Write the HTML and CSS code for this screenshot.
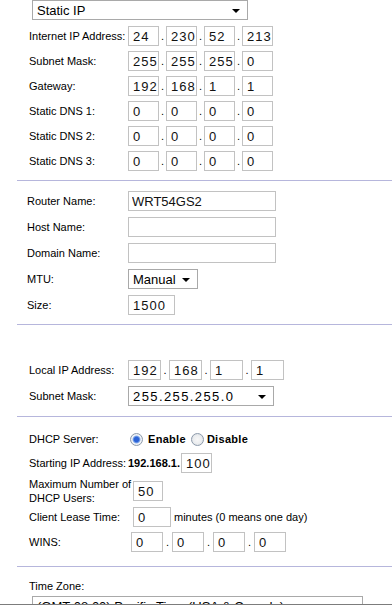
FILE: index.html
```html
<!DOCTYPE html>
<html>
<head>
<meta charset="utf-8">
<link rel="stylesheet" href="styles.css">
</head>
<body>
<div class="page">
  <section class="sec sec-wan">
    <div class="sel sel-wan"><span>Static IP</span><i class="arrow"></i></div>
    <div class="row">
      <span class="lbl">Internet IP Address:</span>
      <div class="ip ip-a"><input class="box" value="24"><span class="dot">.</span><input class="box" value="230"><span class="dot">.</span><input class="box" value="52"><span class="dot">.</span><input class="box" value="213"></div>
    </div>
    <div class="row">
      <span class="lbl">Subnet Mask:</span>
      <div class="ip ip-a"><input class="box" value="255"><span class="dot">.</span><input class="box" value="255"><span class="dot">.</span><input class="box" value="255"><span class="dot">.</span><input class="box" value="0"></div>
    </div>
    <div class="row">
      <span class="lbl">Gateway:</span>
      <div class="ip ip-a"><input class="box" value="192"><span class="dot">.</span><input class="box" value="168"><span class="dot">.</span><input class="box" value="1"><span class="dot">.</span><input class="box" value="1"></div>
    </div>
    <div class="row">
      <span class="lbl">Static DNS 1:</span>
      <div class="ip ip-a"><input class="box" value="0"><span class="dot">.</span><input class="box" value="0"><span class="dot">.</span><input class="box" value="0"><span class="dot">.</span><input class="box" value="0"></div>
    </div>
    <div class="row">
      <span class="lbl">Static DNS 2:</span>
      <div class="ip ip-a"><input class="box" value="0"><span class="dot">.</span><input class="box" value="0"><span class="dot">.</span><input class="box" value="0"><span class="dot">.</span><input class="box" value="0"></div>
    </div>
    <div class="row">
      <span class="lbl">Static DNS 3:</span>
      <div class="ip ip-a"><input class="box" value="0"><span class="dot">.</span><input class="box" value="0"><span class="dot">.</span><input class="box" value="0"><span class="dot">.</span><input class="box" value="0"></div>
    </div>
  </section>
  <hr class="sep sep-1">
  <section class="sec sec-names">
    <div class="row row26">
      <span class="lbl lbl-n">Router Name:</span>
      <input class="box text wide" value="WRT54GS2">
    </div>
    <div class="row row26">
      <span class="lbl lbl-n">Host Name:</span>
      <input class="box text wide" value="">
    </div>
    <div class="row row26">
      <span class="lbl lbl-n">Domain Name:</span>
      <input class="box text wide" value="">
    </div>
    <div class="row row26">
      <span class="lbl lbl-n">MTU:</span>
      <div class="sel sel-mtu"><span>Manual</span><i class="arrow"></i></div>
    </div>
    <div class="row row26">
      <span class="lbl lbl-n">Size:</span>
      <input class="box size" value="1500">
    </div>
  </section>
  <hr class="sep sep-2">
  <section class="sec sec-lan">
    <div class="row row26">
      <span class="lbl">Local IP Address:</span>
      <div class="ip ip-b"><input class="box" value="192"><span class="dot">.</span><input class="box" value="168"><span class="dot">.</span><input class="box" value="1"><span class="dot">.</span><input class="box" value="1"></div>
    </div>
    <div class="row row26">
      <span class="lbl">Subnet Mask:</span>
      <div class="sel sel-mask"><span class="mono">255.255.255.0</span><i class="arrow"></i></div>
    </div>
  </section>
  <hr class="sep sep-3">
  <section class="sec sec-dhcp">
    <div class="row row-dhcp">
      <span class="lbl">DHCP Server:</span>
      <div class="radios">
        <span class="radio on"></span><b class="opt">Enable</b>
        <span class="radio off"></span><b class="opt">Disable</b>
      </div>
    </div>
    <div class="row row26">
      <span class="lbl">Starting IP Address:</span>
      <b class="prefix">192.168.1.</b><input class="box start" value="100">
    </div>
    <div class="row row-max">
      <span class="lbl lbl-2">Maximum Number of<br>DHCP Users:</span>
      <input class="box users" value="50">
    </div>
    <div class="row">
      <span class="lbl">Client Lease Time:</span>
      <input class="box lease" value="0"><span class="note">minutes (0 means one day)</span>
    </div>
    <div class="row">
      <span class="lbl">WINS:</span>
      <div class="ip ip-c"><input class="box" value="0"><span class="dot">.</span><input class="box" value="0"><span class="dot">.</span><input class="box" value="0"><span class="dot">.</span><input class="box" value="0"></div>
    </div>
  </section>
  <hr class="sep sep-4">
  <section class="sec sec-time">
    <div class="tz-label">Time Zone:</div>
    <div class="sel sel-tz"><span>(GMT-08:00) Pacific Time (USA &amp; Canada)</span><i class="arrow"></i></div>
  </section>
</div>
</body>
</html>
```

FILE: styles.css
```css
html, body {
  margin: 0;
  padding: 0;
  background: #fff;
}

body {
  font-family: "Liberation Sans", Arial, sans-serif;
  font-size: 11px;
  color: #000;
}

.page {
  height: 604px;
  overflow: hidden;
  border-bottom: 1px solid #7c7c7c;
}

.sec {
  display: flex;
  flex-direction: column;
}

.sep {
  border: 0;
  height: 1px;
  margin: 0 0 0 17px;
  background: #b6b6dc;
}

.sep-1 { margin-top: 6px; }
.sep-2 { margin-top: 5px; }
.sep-3 { margin-top: 6px; }
.sep-4 { margin-top: 11px; }

.sec-names { padding-top: 8px; }
.sec-lan { padding-top: 33px; }
.sec-dhcp { padding-top: 10px; }
.sec-time { padding-top: 12px; }

.row {
  display: flex;
  align-items: flex-start;
  height: 25px;
}

.row26 { height: 26px; }

.sec-wan .sel-wan + .row { margin-top: 4px; }

.lbl {
  flex: none;
  box-sizing: border-box;
  width: 128px;
  padding-left: 29px;
  line-height: 24px;
  white-space: nowrap;
}

.lbl-n { padding-left: 27px; }

.box {
  flex: none;
  box-sizing: border-box;
  height: 20px;
  margin: 2px 0 0 0;
  padding: 0 0 0 4px;
  border: 1px solid #c2c2c2;
  background: #fff;
  color: #111;
  font-family: "Liberation Sans", Arial, sans-serif;
  font-size: 13px;
  letter-spacing: 1px;
  outline: none;
}

.box.text {
  font-size: 13px;
  letter-spacing: 0;
  padding-left: 3px;
}

.wide { width: 148px; }
.size { width: 47px; }

.ip {
  display: flex;
  margin-top: 2px;
}

.ip .box { margin-top: 0; }

.dot {
  flex: none;
  text-align: center;
  line-height: 21px;
  font-size: 11px;
}

.ip-a .box { width: 31px; }
.ip-a .dot { width: 7px; }

.ip-b .box { width: 33px; }
.ip-b .dot { width: 8px; }

.ip-c { margin-left: 3px; }
.ip-c .box { width: 32px; }
.ip-c .dot { width: 9px; }

.sel {
  flex: none;
  display: flex;
  align-items: center;
  justify-content: space-between;
  box-sizing: border-box;
  height: 20px;
  padding: 0 7px 0 4px;
  border: 1px solid #a9a9a9;
  background: #fff;
  font-size: 13px;
  white-space: nowrap;
  overflow: hidden;
}

.arrow {
  flex: none;
  width: 0;
  height: 0;
  border-left: 4px solid transparent;
  border-right: 4px solid transparent;
  border-top: 4px solid #000;
  margin-top: 1px;
}

.sel-wan {
  width: 216px;
  margin-left: 32px;
}

.sel-mtu {
  width: 70px;
  margin-top: 2px;
}

.sel-mask {
  width: 146px;
  margin-top: 2px;
}

.mono {
  font-family: "Liberation Sans", Arial, sans-serif;
  font-size: 13px;
  letter-spacing: 1.4px;
}

.row-dhcp { height: 24px; }

.radios {
  display: flex;
  align-items: center;
  height: 24px;
  margin-left: 2px;
}

.radio {
  flex: none;
  box-sizing: border-box;
  width: 13px;
  height: 13px;
  border-radius: 50%;
  border: 1px solid #8c9aab;
}

.radio.on {
  background: radial-gradient(circle, #2b62d6 0, #2b62d6 2.2px, #7aa4ea 3.4px, #f3f5f8 4.4px, #dcdfe4 100%);
}

.radio.off {
  background: radial-gradient(circle, #f7f7f7 0, #eceef0 50%, #d4d7dc 100%);
  margin-left: 5px;
}

.opt {
  font-weight: bold;
  margin-left: 5px;
  letter-spacing: 0.3px;
}

.radio.off + .opt { margin-left: 3px; }

.prefix {
  font-weight: bold;
  line-height: 24px;
  margin-left: 0;
}

.start {
  width: 31px;
  margin-left: 1px;
}

.row-max { height: 28px; }

.lbl-2 {
  line-height: 14px;
}

.users {
  width: 30px;
  margin-top: 4px;
  margin-left: 5px;
}

.lease {
  width: 38px;
  margin-left: 5px;
}

.note {
  margin-left: 3px;
  line-height: 24px;
}

.tz-label {
  padding-left: 29px;
  line-height: 14px;
}

.sel-tz {
  width: 331px;
  margin-left: 32px;
  margin-top: 3px;
}
```
